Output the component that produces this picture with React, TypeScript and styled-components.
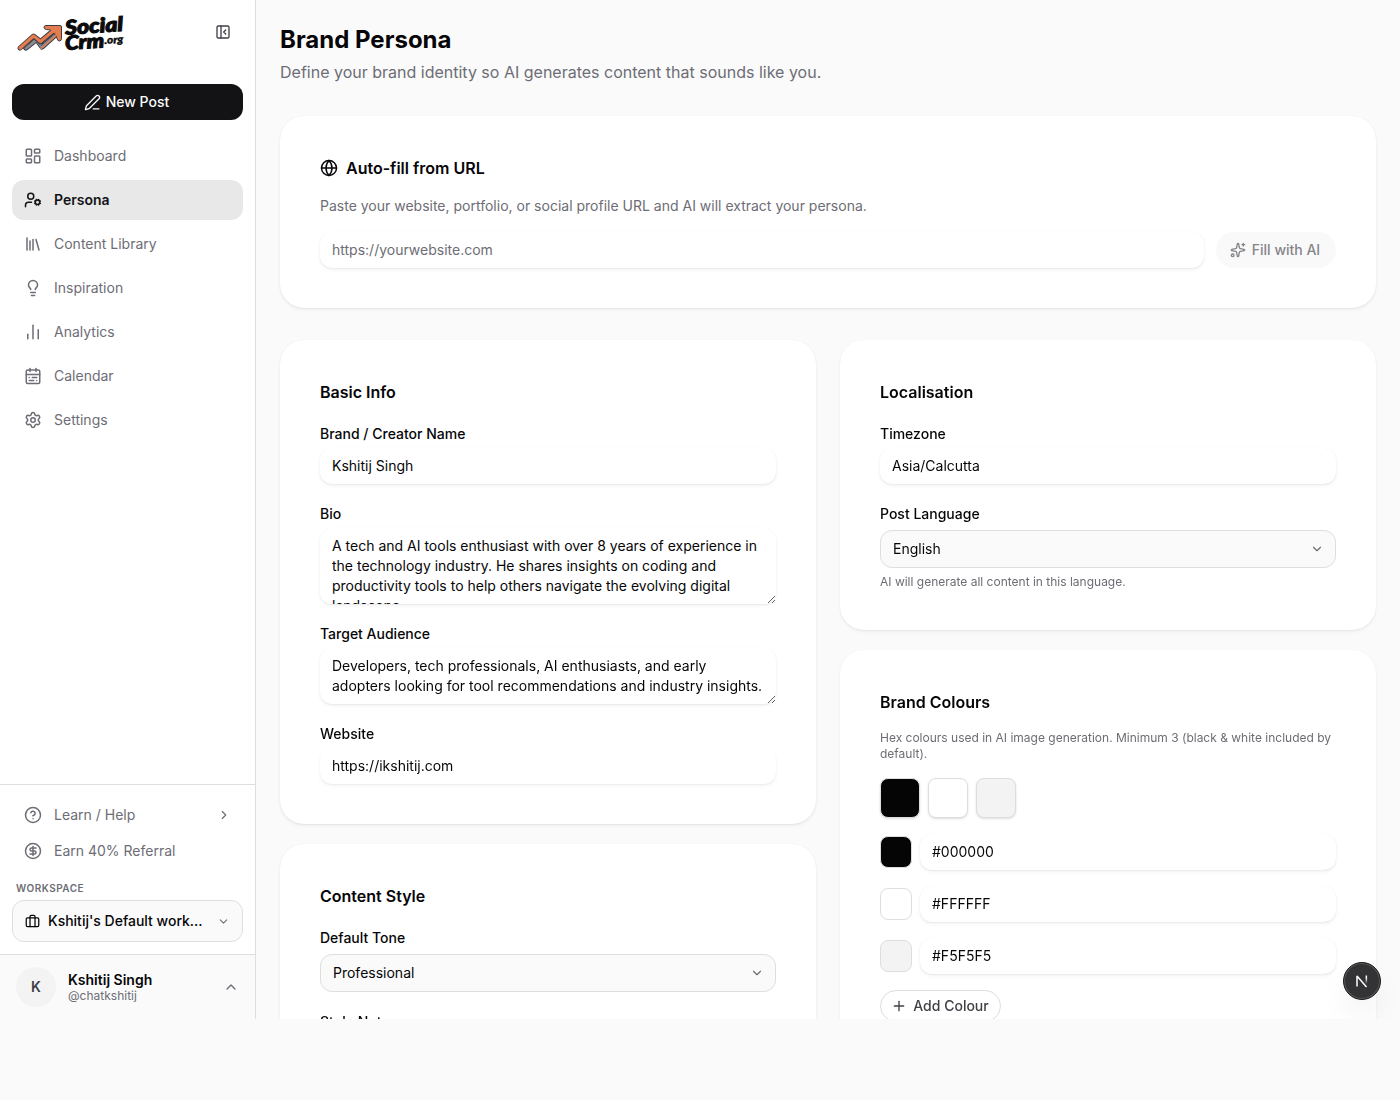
import React from "react";
import styled, { createGlobalStyle } from "styled-components";
import {
  Briefcase,
  CalendarRange,
  ChartNoAxesColumn,
  ChevronDown,
  ChevronRight,
  ChevronUp,
  CircleDollarSign,
  CircleQuestionMark,
  Globe,
  LayoutDashboard,
  Library,
  Lightbulb,
  PanelLeftClose,
  PenLine,
  Plus,
  Settings,
  Sparkles,
  UserCog,
} from "lucide-react";

const GlobalStyle = createGlobalStyle`
  *, *::before, *::after { box-sizing: border-box; }
  body {
    margin: 0;
    background: #fafafa;
    color: #060608;
    font-family: Inter, "Liberation Sans", sans-serif;
    font-size: 14px;
    line-height: 20px;
  }
  h1, h2, p { margin: 0; }
  button, input, textarea { font: inherit; color: inherit; }
  svg { flex-shrink: 0; }
`;

const softShadow =
  "0 2px 4px rgba(0,0,0,0.04), 0 1px 2px rgba(0,0,0,0.06), 0 0 1px rgba(0,0,0,0.06)";

const Frame = styled.div`
  position: relative;
  display: flex;
  height: 1019px;
  overflow: hidden;
`;

const Sidebar = styled.aside`
  display: flex;
  flex-direction: column;
  flex: none;
  width: 256px;
  background: #fff;
  border-right: 1px solid #dedee0;
`;

const SidebarTop = styled.div`
  display: flex;
  justify-content: space-between;
  height: 84px;
  padding: 12px 24px 0 16px;
`;

const LogoSvg = styled.svg`
  overflow: visible;
`;

const CollapseButton = styled.button`
  display: flex;
  align-items: center;
  justify-content: center;
  width: 16px;
  height: 40px;
  padding: 0;
  border: 0;
  background: none;
  color: #3f3f46;
`;

const NewPost = styled.button`
  display: flex;
  align-items: center;
  justify-content: center;
  gap: 5px;
  height: 36px;
  margin: 0 12px;
  padding: 0 2px 0 0;
  border: 0;
  border-radius: 12px;
  background: #131316;
  color: #fcfcfc;
  font-weight: 500;
`;

const Nav = styled.nav`
  display: flex;
  flex-direction: column;
  flex: 1;
  gap: 4px;
  padding: 16px 12px;
`;

const NavItem = styled.a<{ $active?: boolean; $compact?: boolean }>`
  display: flex;
  align-items: center;
  gap: 12px;
  height: ${(p) => (p.$compact ? 36 : 40)}px;
  padding: 0 12px;
  border-radius: 12px;
  background: ${(p) => (p.$active ? "#e8e8e9" : "transparent")};
  color: ${(p) => (p.$active ? "#131316" : "#6d6d75")};
  font-weight: ${(p) => (p.$active ? 600 : 400)};
`;

const NavLabel = styled.span`
  flex: 1;
`;

const Extras = styled.div`
  display: flex;
  flex-direction: column;
  height: 170px;
  padding: 12px 12px 0;
  border-top: 1px solid #dedee0;
`;

const WorkspaceLabel = styled.div`
  padding: 11px 4px 4px;
  font-size: 10px;
  line-height: 16px;
  font-weight: 600;
  letter-spacing: 0.5px;
  color: #6d6d75;
  text-transform: uppercase;
`;

const WorkspacePicker = styled.button`
  display: flex;
  align-items: center;
  gap: 8px;
  height: 42px;
  padding: 0 12px;
  border: 1px solid #dedee0;
  border-radius: 12px;
  background: #fafafa;
  font-weight: 500;
  text-align: left;
`;

const Ellipsis = styled.span`
  flex: 1;
  min-width: 0;
  margin-right: 4px;
  overflow: hidden;
  white-space: nowrap;
  text-overflow: ellipsis;
`;

const Account = styled.div`
  display: flex;
  align-items: center;
  gap: 12px;
  height: 65px;
  padding: 0 16px;
  border-top: 1px solid #dedee0;
  background: #fafafa;
`;

const Avatar = styled.div`
  display: flex;
  align-items: center;
  justify-content: center;
  width: 40px;
  height: 40px;
  border-radius: 50%;
  background: #f3f3f4;
  color: #3f3f46;
  font-weight: 600;
`;

const AccountText = styled.div`
  flex: 1;
  padding-top: 2px;
`;

const AccountName = styled.div`
  line-height: 16px;
  font-weight: 600;
`;

const AccountHandle = styled.div`
  font-size: 12px;
  line-height: 16px;
  color: #6d6d75;
`;

const Main = styled.main`
  flex: 1;
  min-width: 0;
  padding: 24px;
`;

const PageTitle = styled.h1`
  font-size: 24px;
  line-height: 32px;
  font-weight: 700;
`;

const PageLead = styled.p`
  margin: 4px 0 32px;
  font-size: 16px;
  line-height: 24px;
  color: #6d6d75;
`;

const Card = styled.section`
  padding: 40px;
  border-radius: 24px;
  background: #fff;
  box-shadow: ${softShadow};
`;

const CardTitle = styled.h2`
  display: flex;
  align-items: center;
  gap: 8px;
  font-size: 16px;
  line-height: 24px;
  font-weight: 600;
`;

const CardText = styled.p`
  margin: 16px 0;
  color: #6d6d75;
`;

const SmallText = styled.p<{ $top: number }>`
  margin-top: ${(p) => p.$top}px;
  font-size: 12px;
  line-height: 16px;
  color: #6d6d75;
`;

const Columns = styled.div`
  display: grid;
  grid-template-columns: 1fr 1fr;
  align-items: start;
  gap: 24px;
  margin-top: 32px;
`;

const Column = styled.div`
  display: flex;
  flex-direction: column;
  gap: 20px;
`;

const Row = styled.div<{ $gap: number }>`
  display: flex;
  align-items: center;
  gap: ${(p) => p.$gap}px;
`;

const Field = styled.div`
  display: flex;
  flex-direction: column;
  margin-top: 20px;
`;

const Label = styled.label<{ $space?: number }>`
  margin-bottom: ${(p) => p.$space ?? 4}px;
  font-weight: 500;
`;

const Input = styled.input`
  flex: 1 1 auto;
  min-width: 0;
  height: 36px;
  padding: 0 12px 2px;
  border: 0;
  border-radius: 12px;
  outline: 0;
  background: #fff;
  box-shadow: ${softShadow};
  &::placeholder { color: #6d6d75; opacity: 1; }
`;

const TextArea = styled.textarea`
  display: block;
  width: 100%;
  padding: 8px 12px;
  border: 0;
  border-radius: 12px;
  outline: 0;
  resize: vertical;
  scrollbar-width: none;
  background: #fff;
  box-shadow: ${softShadow};
`;

const Select = styled.button`
  display: flex;
  align-items: center;
  justify-content: space-between;
  height: 38px;
  padding: 0 11px 0 12px;
  border: 1px solid #dedee0;
  border-radius: 12px;
  background: #fafafa;
  svg { color: #6d6d75; }
`;

const FillButton = styled.button`
  display: flex;
  align-items: center;
  justify-content: center;
  gap: 6px;
  width: 120px;
  height: 36px;
  padding: 0 2px 0 0;
  border: 0;
  border-radius: 18px;
  background: #f9f9fa;
  color: #858589;
  font-weight: 500;
`;

const Swatches = styled.div`
  display: flex;
  gap: 8px;
  margin-top: 16px;
`;

const Swatch = styled.span<{ $color: string; $size: number; $raised?: boolean }>`
  flex: none;
  width: ${(p) => p.$size}px;
  height: ${(p) => p.$size}px;
  border: 1px solid #dedee0;
  border-radius: 8px;
  background: ${(p) => p.$color};
  box-shadow: ${(p) => (p.$raised ? "0 1px 3px rgba(0,0,0,0.08), 0 1px 2px rgba(0,0,0,0.06)" : "none")};
`;

const ColourRows = styled.div`
  display: flex;
  flex-direction: column;
  gap: 16px;
  margin: 16px 0;
`;

const AddButton = styled.button`
  display: inline-flex;
  align-items: center;
  justify-content: center;
  gap: 6px;
  width: 121px;
  height: 32px;
  padding: 0 1px 0 0;
  border: 1px solid #dedee0;
  border-radius: 16px;
  background: #fff;
  color: #3f3f46;
  font-weight: 500;
`;

const DevBadge = styled.div`
  position: absolute;
  right: 19px;
  bottom: 19px;
  display: flex;
  align-items: center;
  justify-content: center;
  width: 38px;
  height: 38px;
  border: 1px solid #1c1c1c;
  border-radius: 50%;
  background: #333335;
  box-shadow: inset 0 0 0 1px #5a5a5a, 0 16px 32px -8px rgba(0,0,0,0.14);
`;

const Logo = () => (
  <LogoSvg width="110" height="44" viewBox="16 12 110 44" aria-label="Social Crm.org">
    <g strokeLinejoin="round" strokeLinecap="round" fill="none">
      <path d="M26 48 L36.5 39.5 L42 47 L57 33.5" stroke="#3c3c42" strokeWidth="5.2" />
      <path d="M26 48 L36.5 39.5 L42 47 L57 33.5" stroke="#8a8a90" strokeWidth="3.4" />
      <path d="M20 48 L33.5 36 L40.5 41.5 L53 31" stroke="#3c3c42" strokeWidth="5" />
    </g>
    <path
      d="M46 25.5 H60 Q61.5 25.5 61.5 27 V38.5 Q61.5 41 59.5 41 Q57.5 41 57 38.5 L55.5 35 L50 29.8 L46.5 29.6 Q44 29.2 44 27.5 Q44 25.5 46 25.5Z"
      fill="#e57c50"
      stroke="#3c3c42"
      strokeWidth="1"
    />
    <path d="M20 48 L33.5 36 L40.5 41.5 L55 29.5" fill="none" stroke="#e57c50" strokeWidth="3.2" strokeLinejoin="round" strokeLinecap="round" />
    <path d="M23 49 L34.5 39 L41 45.5 L55.5 33" fill="none" stroke="#3c3c42" strokeWidth="0.8" />
    <path d="M40.5 49 L56.5 35" fill="none" stroke="#e57c50" strokeWidth="1.2" />
    <g fontFamily="Lato, 'Noto Sans', sans-serif" fontStyle="italic" fontWeight="900" fill="#0b0b0b" stroke="#0b0b0b">
      <text transform="translate(65.5 34.8) rotate(-4)" fontSize="20" strokeWidth="1.1" textLength="58" lengthAdjust="spacingAndGlyphs">Social</text>
      <text transform="translate(65.5 50) rotate(-4)" fontSize="19.5" strokeWidth="1.1" textLength="39" lengthAdjust="spacingAndGlyphs">Crm</text>
      <text transform="translate(104.5 44) rotate(-4)" fontSize="10.5" strokeWidth="0.4" textLength="19" lengthAdjust="spacingAndGlyphs">.org</text>
    </g>
  </LogoSvg>
);

const navItems = [
  { label: "Dashboard", Icon: LayoutDashboard },
  { label: "Persona", Icon: UserCog, active: true },
  { label: "Content Library", Icon: Library },
  { label: "Inspiration", Icon: Lightbulb },
  { label: "Analytics", Icon: ChartNoAxesColumn },
  { label: "Calendar", Icon: CalendarRange },
  { label: "Settings", Icon: Settings },
];

const colours = ["#000000", "#FFFFFF", "#F5F5F5"];
const paint = (hex: string) => (hex === "#000000" ? "#050505" : hex === "#F5F5F5" ? "#f3f3f3" : hex);

const TextField = ({ label, value }: { label: string; value: string }) => (
  <Field>
    <Label>{label}</Label>
    <Input defaultValue={value} />
  </Field>
);

const AreaField = ({ label, value, height }: { label: string; value: string; height: number }) => (
  <Field>
    <Label>{label}</Label>
    <TextArea defaultValue={value} style={{ height }} />
  </Field>
);

const SelectField = ({ label, value }: { label: string; value: string }) => (
  <Field>
    <Label $space={6}>{label}</Label>
    <Select>
      {value}
      <ChevronDown size={14} />
    </Select>
  </Field>
);

export default function App() {
  return (
    <>
      <GlobalStyle />
      <Frame>
        <Sidebar>
          <SidebarTop>
            <Logo />
            <CollapseButton aria-label="Collapse sidebar">
              <PanelLeftClose size={16} strokeWidth={2} />
            </CollapseButton>
          </SidebarTop>
          <NewPost>
            <PenLine size={17} strokeWidth={1.8} />
            New Post
          </NewPost>
          <Nav>
            {navItems.map(({ label, Icon, active }) => (
              <NavItem key={label} $active={active}>
                <Icon size={18} strokeWidth={2} />
                <NavLabel>{label}</NavLabel>
              </NavItem>
            ))}
          </Nav>
          <Extras>
            <NavItem $compact>
              <CircleQuestionMark size={18} />
              <NavLabel>Learn / Help</NavLabel>
              <ChevronRight size={14} />
            </NavItem>
            <NavItem $compact>
              <CircleDollarSign size={18} />
              <NavLabel>Earn 40% Referral</NavLabel>
            </NavItem>
            <WorkspaceLabel>Workspace</WorkspaceLabel>
            <WorkspacePicker>
              <Briefcase size={15} />
              <Ellipsis>Kshitij's Default workspace</Ellipsis>
              <ChevronDown size={13} color="#6d6d75" />
            </WorkspacePicker>
          </Extras>
          <Account>
            <Avatar>K</Avatar>
            <AccountText>
              <AccountName>Kshitij Singh</AccountName>
              <AccountHandle>@chatkshitij</AccountHandle>
            </AccountText>
            <ChevronUp size={16} color="#6d6d75" />
          </Account>
        </Sidebar>

        <Main>
          <PageTitle>Brand Persona</PageTitle>
          <PageLead>Define your brand identity so AI generates content that sounds like you.</PageLead>
          <Card>
            <CardTitle>
              <Globe size={18} />
              Auto-fill from URL
            </CardTitle>
            <CardText>Paste your website, portfolio, or social profile URL and AI will extract your persona.</CardText>
            <Row $gap={12}>
              <Input placeholder="https://yourwebsite.com" />
              <FillButton disabled>
                <Sparkles size={16} />
                Fill with AI
              </FillButton>
            </Row>
          </Card>

          <Columns>
            <Column>
              <Card>
                <CardTitle>Basic Info</CardTitle>
                <TextField label="Brand / Creator Name" value="Kshitij Singh" />
                <AreaField
                  label="Bio"
                  height={76}
                  value="A tech and AI tools enthusiast with over 8 years of experience in the technology industry. He shares insights on coding and productivity tools to help others navigate the evolving digital landscape."
                />
                <AreaField
                  label="Target Audience"
                  height={56}
                  value="Developers, tech professionals, AI enthusiasts, and early adopters looking for tool recommendations and industry insights."
                />
                <TextField label="Website" value="https://ikshitij.com" />
              </Card>
              <Card>
                <CardTitle>Content Style</CardTitle>
                <SelectField label="Default Tone" value="Professional" />
                <AreaField label="Style Notes" value="" height={76} />
              </Card>
            </Column>
            <Column>
              <Card>
                <CardTitle>Localisation</CardTitle>
                <TextField label="Timezone" value="Asia/Calcutta" />
                <SelectField label="Post Language" value="English" />
                <SmallText $top={6}>AI will generate all content in this language.</SmallText>
              </Card>
              <Card>
                <CardTitle>Brand Colours</CardTitle>
                <SmallText $top={16}>
                  Hex colours used in AI image generation. Minimum 3 (black &amp; white included by default).
                </SmallText>
                <Swatches>
                  {colours.map((hex) => (
                    <Swatch key={hex} $color={paint(hex)} $size={40} $raised />
                  ))}
                </Swatches>
                <ColourRows>
                  {colours.map((hex) => (
                    <Row key={hex} $gap={8}>
                      <Swatch $color={paint(hex)} $size={32} />
                      <Input defaultValue={hex} />
                    </Row>
                  ))}
                </ColourRows>
                <AddButton>
                  <Plus size={16} />
                  Add Colour
                </AddButton>
              </Card>
            </Column>
          </Columns>
        </Main>

        <DevBadge>
          <svg width="14" height="14" viewBox="0 0 14 14" fill="none">
            <defs>
              <linearGradient id="stem" x1="0" y1="0" x2="0" y2="1">
                <stop offset="0.3" stopColor="#fff" />
                <stop offset="1" stopColor="#fff" stopOpacity="0" />
              </linearGradient>
            </defs>
            <path d="M2 12.5 V2 L11.5 13" stroke="#fff" strokeWidth="1.5" strokeLinejoin="bevel" />
            <rect x="10.6" y="1.5" width="1.5" height="8.5" fill="url(#stem)" />
          </svg>
        </DevBadge>
      </Frame>
    </>
  );
}
